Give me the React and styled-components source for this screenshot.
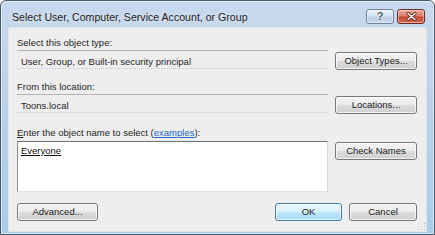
import React from 'react';
import styled, { createGlobalStyle } from 'styled-components';

const GlobalStyle = createGlobalStyle`
  html, body {
    margin: 0;
    padding: 0;
    background: #ffffff;
  }
  * {
    box-sizing: border-box;
  }
`;

const Window = styled.div`
  width: 435px;
  height: 235px;
  display: flex;
  flex-direction: column;
  border: 1px solid #4b5a6b;
  border-radius: 6px 6px 0 0;
  background: linear-gradient(180deg, #c8d9ee 0%, #bcd2ea 40%, #a9cdea 100%);
  box-shadow: inset 0 0 0 1px rgba(255, 255, 255, 0.5);
  font-family: "Liberation Sans", Arial, sans-serif;
  overflow: hidden;
`;

const TitleBar = styled.div`
  height: 26px;
  flex: none;
  display: flex;
  align-items: flex-start;
  padding: 0 9px 0 11px;
`;

const Title = styled.div`
  flex: 1;
  padding-top: 10px;
  font-size: 10.6px;
  line-height: 13px;
  color: #1b1b1b;
  text-shadow: 0 0 4px rgba(255, 255, 255, 0.8);
  white-space: nowrap;
`;

const CaptionButton = styled.div`
  margin-top: 8px;
  width: ${(p) => p.$w}px;
  height: 15px;
  border-radius: 3px;
  display: flex;
  align-items: center;
  justify-content: center;
  border: 1px solid ${(p) => (p.$close ? '#6e2a1f' : '#6f8199')};
  background: ${(p) =>
    p.$close
      ? 'linear-gradient(180deg, #eba898 0%, #dc7a66 48%, #c74a34 52%, #d46a52 100%)'
      : 'linear-gradient(180deg, #e9f0f8 0%, #d5e2f1 48%, #bccee4 52%, #c9d9ec 100%)'};
  box-shadow: inset 0 0 0 1px rgba(255, 255, 255, 0.45);
  & + & {
    margin-left: 3px;
  }
`;

const HelpGlyph = styled.span`
  font-family: "Liberation Sans", Arial, sans-serif;
  font-weight: bold;
  font-size: 11px;
  line-height: 11px;
  color: #4a5a70;
  text-shadow: 0 0 1px #ffffff, 0 0 2px #ffffff;
`;

const Client = styled.div`
  flex: 1;
  margin: 0 7px 4px 7px;
  border: 1px solid #dfe3e8;
  background: #eeeeee;
  padding: 8px 9px 10px 8px;
  display: flex;
  flex-direction: column;
  position: relative;
`;

const Form = styled.div`
  display: grid;
  grid-template-columns: 1fr 82px;
  column-gap: 7px;
  align-items: start;
`;

const Label = styled.div`
  grid-column: 1;
  font-size: 9.5px;
  line-height: 13px;
  color: #1e1e1e;
  margin-top: ${(p) => p.$top || 0}px;
  white-space: nowrap;
`;

const Field = styled.div`
  grid-column: 1;
  height: 19px;
  margin-top: 1px;
  border-top: 1px solid #b4b4b4;
  border-bottom: 1px dotted #bccde0;
  padding: 4px 0 0 4px;
  font-size: 9.5px;
  line-height: 13px;
  color: #1e1e1e;
  white-space: nowrap;
`;

const NameBox = styled.div`
  grid-column: 1;
  height: 51px;
  margin-top: 2px;
  background: #ffffff;
  border: 1px solid;
  border-color: #6f6f6f #d6d6d6 #e2e2e2 #8c8c8c;
  padding: 2px 3px;
  font-size: 9.5px;
  line-height: 13px;
  color: #111111;
`;

const Resolved = styled.span`
  text-decoration: underline;
`;

const Link = styled.span`
  color: #1a66c9;
  text-decoration: underline;
`;

const Button = styled.div`
  grid-column: ${(p) => (p.$side ? 2 : 'auto')};
  width: ${(p) => p.$w || 82}px;
  height: 18px;
  margin-top: ${(p) => (p.$side ? 3 : 0)}px;
  display: flex;
  align-items: center;
  justify-content: center;
  border: 1px solid ${(p) => (p.$default ? '#3c7fb1' : '#777777')};
  border-radius: 3px;
  background: ${(p) =>
    p.$default
      ? 'linear-gradient(180deg, #eaf6fd 0%, #d9f0fc 50%, #bee6fd 50%, #a7d9f5 100%)'
      : 'linear-gradient(180deg, #f4f4f4 0%, #ebebeb 50%, #dddddd 50%, #cfcfcf 100%)'};
  box-shadow: inset 0 0 0 1px rgba(255, 255, 255, 0.75);
  font-size: 9.5px;
  line-height: 12px;
  color: #1a1a1a;
  white-space: nowrap;
`;

const Footer = styled.div`
  margin-top: 11px;
  display: flex;
  align-items: center;
  gap: 7px;
`;

const Spacer = styled.div`
  flex: 1;
`;

const Grip = styled.div`
  position: absolute;
  right: 1px;
  bottom: 1px;
  width: 8px;
  height: 8px;
  background:
    radial-gradient(circle, #b9b9b9 0.8px, transparent 1px) 0 0 / 3px 3px;
  clip-path: polygon(100% 0, 100% 100%, 0 100%);
`;

const CloseIcon = () => (
  <svg width="11" height="9" viewBox="0 0 11 9">
    <path d="M2 1.5 L9 7.5 M9 1.5 L2 7.5" stroke="#5a1c12" strokeWidth="3" strokeLinecap="round" />
    <path d="M2 1.5 L9 7.5 M9 1.5 L2 7.5" stroke="#ffffff" strokeWidth="1.6" strokeLinecap="round" />
  </svg>
);

export default function App() {
  return (
    <>
      <GlobalStyle />
      <Window>
        <TitleBar>
          <Title>Select User, Computer, Service Account, or Group</Title>
          <CaptionButton $w={28}>
            <HelpGlyph>?</HelpGlyph>
          </CaptionButton>
          <CaptionButton $w={28} $close>
            <CloseIcon />
          </CaptionButton>
        </TitleBar>

        <Client>
          <Form>
            <Label>Select this object type:</Label>
            <Field>User, Group, or Built-in security principal</Field>
            <Button $side>Object Types...</Button>

            <Label $top={10}>From this location:</Label>
            <Field>Toons.local</Field>
            <Button $side>Locations...</Button>

            <Label $top={12}>
              <u>E</u>nter the object name to select (<Link>examples</Link>):
            </Label>
            <NameBox>
              <Resolved>Everyone</Resolved>
            </NameBox>
            <Button $side>Check Names</Button>
          </Form>

          <Footer>
            <Button $w={81}>Advanced...</Button>
            <Spacer />
            <Button $w={67} $default>OK</Button>
            <Button $w={68}>Cancel</Button>
          </Footer>
          <Grip />
        </Client>
      </Window>
    </>
  );
}
